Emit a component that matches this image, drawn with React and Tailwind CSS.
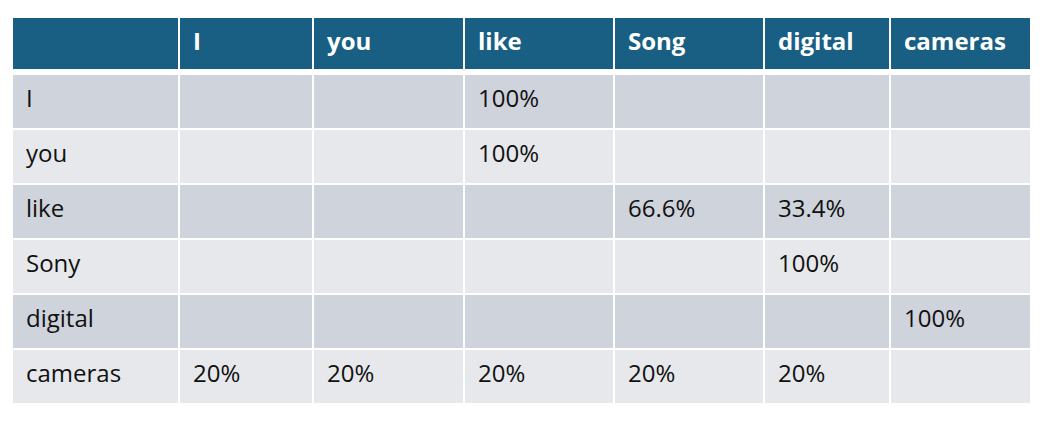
const cols = "grid grid-cols-[165px_132px_149px_148px_148px_124px_139px] gap-x-[2px]";

const header = ["", "I", "you", "like", "Song", "digital", "cameras"];

const rows = [
  ["I", "", "", "100%", "", "", ""],
  ["you", "", "", "100%", "", "", ""],
  ["like", "", "", "", "66.6%", "33.4%", ""],
  ["Sony", "", "", "", "", "100%", ""],
  ["digital", "", "", "", "", "", "100%"],
  ["cameras", "20%", "20%", "20%", "20%", "20%", ""],
];

export default function App() {
  return (
    <div className="h-[428px] w-[1048px] bg-white pl-[13px] pt-[18px] font-['Open_Sans',sans-serif] text-[24px] text-[#111]">
      <div className={`${cols} mb-[6px]`}>
        {header.map((h, i) => (
          <div key={i} className="flex h-[51px] items-center bg-[#185f83] pb-[5px] pl-[13px] text-[24px] font-bold text-white">
            {h}
          </div>
        ))}
      </div>
      <div className="flex flex-col gap-y-[2px]">
        {rows.map((row, r) => (
          <div key={r} className={cols}>
            {row.map((c, i) => (
              <div
                key={i}
                className={`flex h-[53px] items-center pb-[8px] pl-[13px] ${r % 2 === 0 ? "bg-[#cfd3db]" : "bg-[#e6e8eb]"}`}
              >
                {c}
              </div>
            ))}
          </div>
        ))}
      </div>
    </div>
  );
}
